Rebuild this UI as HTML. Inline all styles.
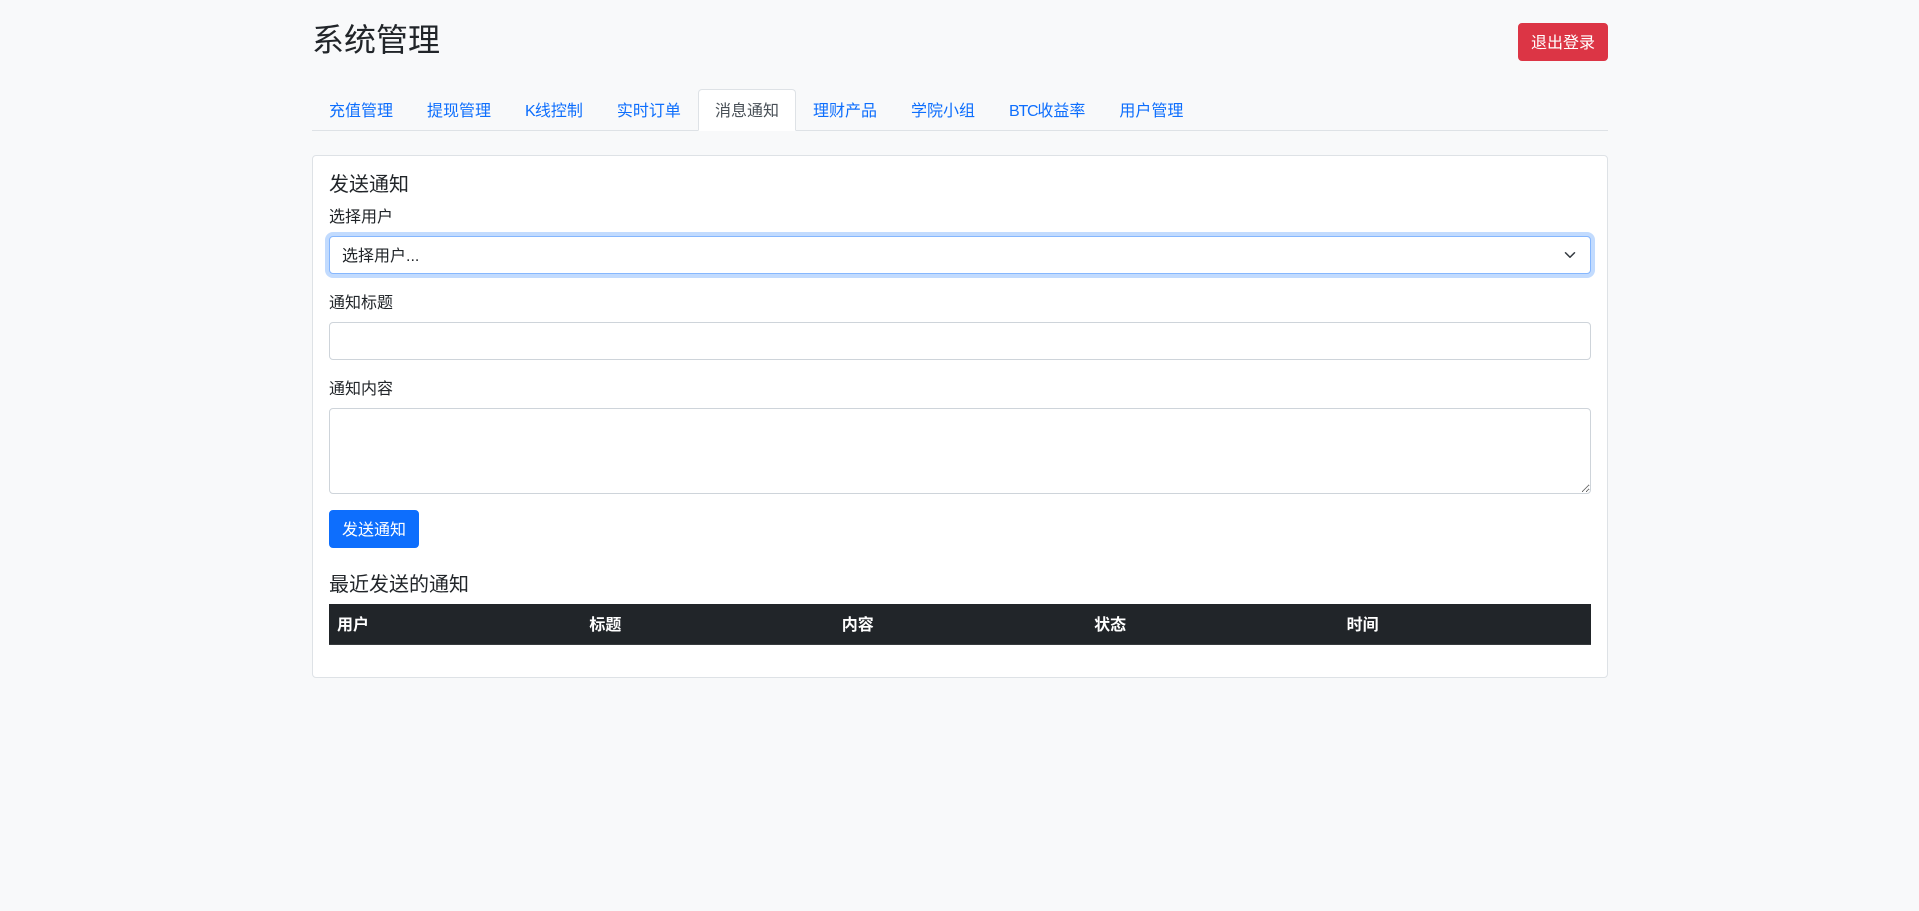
<!DOCTYPE html>
<html lang="zh-CN">
<head>
<meta charset="utf-8">
<title>系统管理</title>
<style>
*{box-sizing:border-box}
html,body{margin:0;padding:0}
body{width:1919px;height:911px;overflow:hidden;background:#f8f9fa;color:#212529;font-family:"Liberation Sans","Noto Sans CJK SC",sans-serif;font-size:16px;line-height:1.5}
.container{position:absolute;left:300px;top:0;width:1320px;padding:0 12px}
.head{position:absolute;left:12px;right:12px;top:19px;height:46px;}
h2{margin:0;font-size:32px;font-weight:400;line-height:38.4px;position:relative;top:2px}
.btn{display:block;border:1px solid transparent;border-radius:4px;padding:8px 12px 4px;color:#fff;font:inherit;line-height:24px;height:38px}
.logout{position:absolute;right:0;top:4px;width:90px;background:#dc3545;border-color:#dc3545}
.nav{position:absolute;left:12px;right:12px;top:89px;height:42px;margin:0;padding:0;list-style:none;display:flex;border-bottom:1px solid #dee2e6}
.nav a{display:block;height:42px;padding:10px 16px 6px;border:1px solid transparent;border-radius:4px 4px 0 0;color:#0d6efd;text-decoration:none}
.nav a.active{color:#495057;background:#fff;border-color:#dee2e6 #dee2e6 #fff}
.k{letter-spacing:-.8px}
.b{letter-spacing:-1.2px}
.card{position:absolute;left:12px;right:12px;top:155px;height:523px;background:#fff;border:1px solid #dee2e6;border-radius:4px;padding:16px}
h5{margin:0 0 8px;font-size:20px;font-weight:400;line-height:24px;position:relative;top:1px}
label{display:block;margin:0 0 8px;line-height:24px;position:relative;top:2px}
.group{position:relative;margin-bottom:16px}
.control{display:block;width:100%;height:38px;padding:6px 12px;border:1px solid #ced4da;border-radius:4px;background:#fff;color:#212529;font:inherit;line-height:24px;outline:0;margin:0}
select.control{appearance:none;-webkit-appearance:none;padding:8px 36px 4px 12px;border-color:#86b7fe;box-shadow:0 0 0 4px rgba(13,110,253,.25)}
textarea.control{height:86px;resize:vertical}
.arrow{position:absolute;right:12px;top:45px;width:16px;height:12px;pointer-events:none;margin-right:1px}
.send{width:90px;background:#0d6efd;border-color:#0d6efd}
h5.recent{margin-top:24px}
table{width:100%;border-collapse:separate;border-spacing:0;table-layout:fixed;margin:0}
th{background:#212529;color:#fff;font-weight:700;text-align:left;padding:10px 8px 6px;line-height:24px;height:41px;border-bottom:1px solid #373b3e}
</style>
</head>
<body>
<div class="container">
  <div class="head">
    <h2>系统管理</h2>
    <button class="btn logout">退出登录</button>
  </div>
  <ul class="nav">
    <li><a href="#">充值管理</a></li>
    <li><a href="#">提现管理</a></li>
    <li><a href="#"><span class="k">K</span>线控制</a></li>
    <li><a href="#">实时订单</a></li>
    <li><a href="#" class="active">消息通知</a></li>
    <li><a href="#">理财产品</a></li>
    <li><a href="#">学院小组</a></li>
    <li><a href="#"><span class="b">BTC</span>收益率</a></li>
    <li><a href="#">用户管理</a></li>
  </ul>
  <div class="card">
    <h5>发送通知</h5>
    <div class="group">
      <label>选择用户</label>
      <select class="control"><option>选择用户...</option></select>
      <svg class="arrow" viewBox="0 0 16 16" preserveAspectRatio="xMidYMid meet"><path fill="none" stroke="#343a40" stroke-linecap="round" stroke-linejoin="round" stroke-width="2" d="m2 5 6 6 6-6"/></svg>
    </div>
    <div class="group">
      <label>通知标题</label>
      <input class="control" type="text">
    </div>
    <div class="group">
      <label>通知内容</label>
      <textarea class="control" rows="3"></textarea>
    </div>
    <button class="btn send">发送通知</button>
    <h5 class="recent">最近发送的通知</h5>
    <table>
      <thead><tr><th>用户</th><th>标题</th><th>内容</th><th>状态</th><th>时间</th></tr></thead>
    </table>
  </div>
</div>
</body>
</html>
